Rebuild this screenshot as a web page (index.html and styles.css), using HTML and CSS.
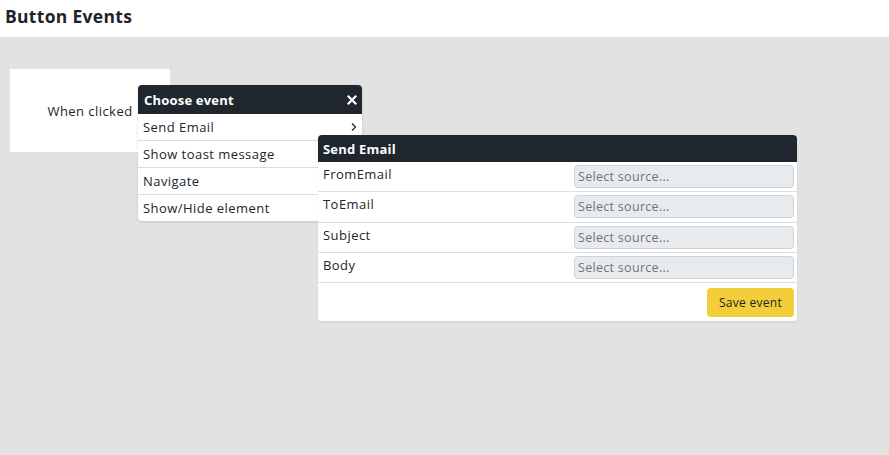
FILE: index.html
```html
<!DOCTYPE html>
<html>
<head>
<meta charset="utf-8">
<link rel="stylesheet" href="styles.css">
</head>
<body>
<header class="topbar"><h1 class="title">Button Events</h1></header>
<main class="canvas">
  <div class="trigger-card">When clicked</div>

  <div class="menu">
    <div class="menu-head"><span>Choose event</span>
      <svg class="close" width="10" height="10" viewBox="0 0 10 10"><path d="M1.5 1.5 L8.5 8.5 M8.5 1.5 L1.5 8.5" stroke="#fff" stroke-width="2.2" stroke-linecap="square"/></svg>
    </div>
    <div class="menu-item">Send Email
      <svg class="chev" width="8" height="10" viewBox="0 0 8 10"><path d="M2 1.5 L5.5 5 L2 8.5" fill="none" stroke="#222" stroke-width="1.2"/></svg>
    </div>
    <div class="menu-item">Show toast message</div>
    <div class="menu-item">Navigate</div>
    <div class="menu-item last">Show/Hide element</div>
  </div>

  <div class="panel">
    <div class="panel-head">Send Email</div>
    <div class="row"><span class="label">FromEmail</span><div class="select">Select source...</div></div>
    <div class="row"><span class="label">ToEmail</span><div class="select">Select source...</div></div>
    <div class="row"><span class="label">Subject</span><div class="select">Select source...</div></div>
    <div class="row"><span class="label">Body</span><div class="select">Select source...</div></div>
    <div class="panel-foot"><button class="save">Save event</button></div>
  </div>
</main>
</body>
</html>
```

FILE: styles.css
```css
* { box-sizing: border-box; }
body {
  margin: 0;
  font-family: "Open Sans", "DejaVu Sans", sans-serif;
  color: #212529;
  background: #e2e2e2;
  height: 455px;
  overflow: hidden;
  letter-spacing: 0.45px;
}
.topbar {
  height: 37px;
  background: #fff;
  padding: 4px 5px 0;
}
.title {
  margin: 0;
  font-size: 17.5px;
  font-weight: 700;
  line-height: 24px;
  color: #1e232b;
  letter-spacing: 0.3px;
}
.canvas {
  position: relative;
  padding: 32px 10px;
}
.trigger-card {
  width: 160px;
  height: 83px;
  background: #fff;
  display: flex;
  align-items: center;
  justify-content: center;
  font-size: 13px;
}
.menu {
  position: absolute;
  left: 138px;
  top: 48px;
  width: 224px;
  background: #fff;
  border-radius: 4px;
  box-shadow: 0 1px 3px rgba(0,0,0,0.12);
}
.menu-head {
  height: 29px;
  background: #1f262e;
  color: #fff;
  border-radius: 4px 4px 0 0;
  display: flex;
  align-items: center;
  justify-content: space-between;
  padding: 0 5px 0 6px;
  font-size: 13px;
  font-weight: 700;
  letter-spacing: 0.2px;
}
.close { display: block; }
.menu-item {
  height: 27px;
  border-bottom: 1px solid #dcdcdc;
  display: flex;
  align-items: center;
  justify-content: space-between;
  padding: 0 4px 0 5px;
  font-size: 13px;
}
.menu-item.last { border-bottom: none; height: 26px; }
.panel {
  position: absolute;
  left: 318px;
  top: 98px;
  width: 479px;
  background: #fff;
  border-radius: 4px;
  box-shadow: 0 1px 2px rgba(0,0,0,0.08);
}
.panel-head {
  height: 27px;
  background: #1f262e;
  color: #fff;
  border-radius: 4px 4px 0 0;
  font-size: 13px;
  font-weight: 700;
  padding: 0 5px;
  display: flex;
  align-items: center;
  letter-spacing: 0.2px;
}
.row {
  height: 30.3px;
  border-bottom: 1px solid #dedede;
  display: flex;
  justify-content: space-between;
  align-items: flex-start;
  padding: 3px 3px 0 5px;
  font-size: 13px;
}
.label { line-height: 19px; }
.select {
  width: 220px;
  height: 23px;
  background: #e8ebee;
  border: 1px solid #cdd2d7;
  border-radius: 4px;
  font-size: 12.5px;
  color: #6c747d;
  padding: 0 3px;
  line-height: 21px;
  letter-spacing: 0.3px;
}
.panel-foot {
  height: 38px;
  display: flex;
  justify-content: flex-end;
  align-items: center;
  padding-right: 3px;
}
.save {
  width: 87px;
  height: 29px;
  background: #f3cd3a;
  border: none;
  border-radius: 4px;
  font-family: inherit;
  font-size: 12px;
  letter-spacing: 0.3px;
  color: #212529;
}
```
